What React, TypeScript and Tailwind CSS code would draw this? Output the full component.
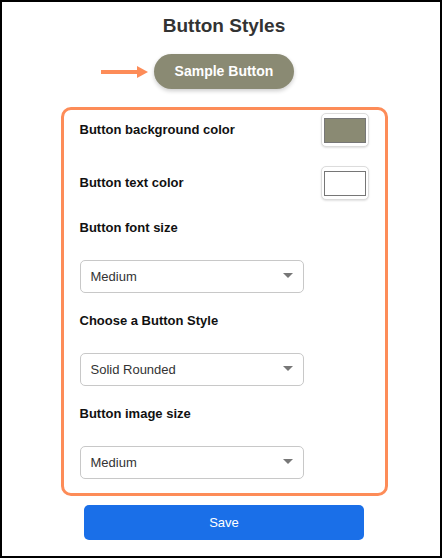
import { useState } from "react";

const ORANGE = "#fd8c58";

function ColorRow({ label, color }: { label: string; color: string }) {
  return (
    <div className="flex h-[34px] items-center justify-between">
      <span className="text-[13px] font-bold leading-[16px] text-[#111]">{label}</span>
      <div className="flex h-[34px] w-[48px] items-center justify-center rounded-[5px] border border-[#dcdcdc] bg-white shadow-[0_1px_2px_rgba(0,0,0,0.12)]">
        <div
          className="h-[25px] w-[42px] border border-[#767676]"
          style={{ backgroundColor: color }}
        />
      </div>
    </div>
  );
}

function SelectBox({ value }: { value: string }) {
  return (
    <div className="flex h-[33px] w-[224px] items-center justify-between rounded-[5px] border border-[#c8c8c8] bg-white pl-[10px] pr-[10px]">
      <span className="text-[13px] leading-[16px] text-[#333]">{value}</span>
      <svg width="10" height="5" viewBox="0 0 10 5" className="-mt-[3px]">
        <path d="M0 0 L10 0 L5 5 Z" fill="#777" />
      </svg>
    </div>
  );
}

export default function App() {
  const [bg] = useState("#8a8a73");
  const [fg] = useState("#ffffff");

  return (
    <div
      className="h-[558px] w-[442px] border-2 border-black bg-white"
      style={{ fontFamily: '"Liberation Sans", Arial, sans-serif' }}
    >
      <div className="flex flex-col items-center pl-[6px] pt-[13px]">

        {/* Title */}
        <h1 className="text-[19px] font-bold leading-[22px] text-[#333]">
          Button Styles
        </h1>

        {/* Sample button with arrow */}
        <div className="relative mt-[17px]">
          <svg
            className="absolute right-full top-[12px] mr-[6px]"
            width="47"
            height="12"
            viewBox="0 0 47 12"
          >
            <rect x="0" y="4" width="37" height="4" fill={ORANGE} />
            <path d="M36 0 L47 6 L36 12 Z" fill={ORANGE} />
          </svg>
          <button
            className="h-[35px] w-[140px] rounded-full text-[14px] font-bold leading-[17px] shadow-[0_2px_4px_rgba(0,0,0,0.2)]"
            style={{ backgroundColor: bg, color: fg }}
          >
            Sample Button
          </button>
        </div>

        {/* Settings panel */}
        <div
          className="mt-[18px] w-[327px] rounded-[10px] border-[3px] px-[16px] pb-[14px] pt-[3px]"
          style={{ borderColor: ORANGE }}
        >
          <ColorRow label="Button background color" color={bg} />

          <div className="mt-[19px]">
            <ColorRow label="Button text color" color={fg} />
          </div>

          <div className="mt-[20px] text-[13px] font-bold leading-[16px] text-[#111]">
            Button font size
          </div>
          <div className="mt-[24px]">
            <SelectBox value="Medium" />
          </div>

          <div className="mt-[20px] text-[13px] font-bold leading-[16px] text-[#111]">
            Choose a Button Style
          </div>
          <div className="mt-[24px]">
            <SelectBox value="Solid Rounded" />
          </div>

          <div className="mt-[20px] text-[13px] font-bold leading-[16px] text-[#111]">
            Button image size
          </div>
          <div className="mt-[24px]">
            <SelectBox value="Medium" />
          </div>
        </div>

        {/* Save */}
        <button className="mt-[9px] h-[35px] w-[280px] rounded-[5px] bg-[#1a6fe8] text-[13px] leading-[16px] text-white">
          Save
        </button>

      </div>
    </div>
  );
}
